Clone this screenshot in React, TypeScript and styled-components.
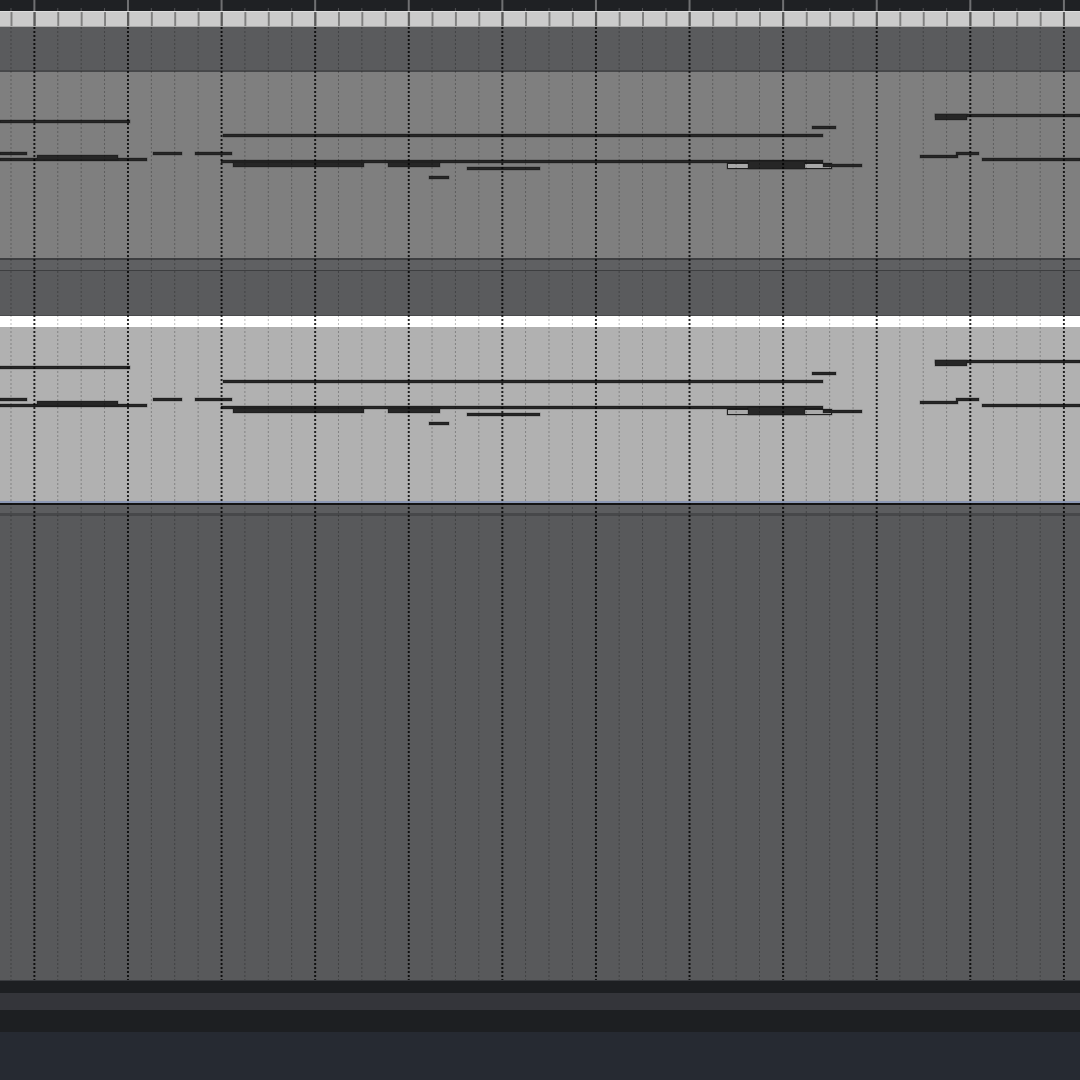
import React from "react";
import styled, { createGlobalStyle } from "styled-components";

const MINOR = 23.4;
const MAJOR = 93.6;
const MINOR_X = 10.5;
const MAJOR_X = 33.4;

const GlobalStyle = createGlobalStyle`
  html, body { margin: 0; padding: 0; background: #58595b; }
  body { width: 1080px; height: 1080px; overflow: hidden; font-family: "Liberation Sans", Arial, sans-serif; }
`;

const Page = styled.div`
  display: flex;
  flex-direction: column;
  width: 1080px;
  height: 1080px;
`;

const TopRuler = styled.div`
  flex: 0 0 11px;
  background-color: #1f2124;
  background-image:
    linear-gradient(to right, #6f7072 0 2px, transparent 2px),
    linear-gradient(to right, #4e4f52 0 1px, transparent 1px);
  background-size: ${MAJOR}px 100%, ${MINOR}px 3px;
  background-position: ${MAJOR_X}px 0, ${MINOR_X}px 100%;
  background-repeat: repeat-x;
`;

const BeatBar = styled.div`
  flex: 0 0 16px;
  box-sizing: border-box;
  border-top: 1px solid #dddddd;
  border-bottom: 1px solid #a9a9a9;
  background-color: #cbcbcb;
  background-image:
    linear-gradient(to right, #5b5b5b 0 2px, transparent 2px),
    linear-gradient(to right, #808080 0 2px, transparent 2px);
  background-size: ${MAJOR}px 100%, ${MINOR}px 100%;
  background-position: ${MAJOR_X}px 0, ${MINOR_X}px 0;
`;

const Arrange = styled.div`
  position: relative;
  flex: 0 0 953px;
  display: flex;
  flex-direction: column;
`;

const Lane = styled.div<{ $h: number }>`
  flex: 0 0 ${(p) => p.$h}px;
  background: #5a5b5d;
`;

const Line = styled.div<{ $h: number; $c: string }>`
  flex: 0 0 ${(p) => p.$h}px;
  background: ${(p) => p.$c};
`;

const Band = styled.div`
  flex: 0 0 13px;
  box-sizing: border-box;
  background: #5f6062;
  border-top: 2px solid #3d3e40;
  border-bottom: 1px solid #3d3e40;
`;

const ClipHeader = styled.div`
  flex: 0 0 11px;
  background: #ffffff;
`;

const ClipBody = styled.div<{ $h: number; $bg: string }>`
  position: relative;
  flex: 0 0 ${(p) => p.$h}px;
  background: ${(p) => p.$bg};
  overflow: hidden;
`;

const Note = styled.div<{ $light?: boolean }>`
  position: absolute;
  box-sizing: border-box;
  background: ${(p) => (p.$light ? "#a9a9a9" : "#262626")};
  border: 1px solid #202020;
  box-shadow: 0 0 0 0.5px rgba(0, 0, 0, 0.25);
`;

const Empty = styled.div`
  flex: 1 1 auto;
  background: #58595b;
`;

const GridOverlay = styled.div`
  position: absolute;
  inset: 0;
  pointer-events: none;
  background-image:
    linear-gradient(to right, rgba(0, 0, 0, 0.78) 0 2px, transparent 2px),
    linear-gradient(to right, rgba(0, 0, 0, 0.27) 0 1px, transparent 1px);
  background-size: ${MAJOR}px 100%, ${MINOR}px 100%;
  background-position: ${MAJOR_X}px 0, ${MINOR_X}px 0;
  -webkit-mask-image: repeating-linear-gradient(to bottom, #000 0 2px, transparent 2px 4px);
  mask-image: repeating-linear-gradient(to bottom, #000 0 2px, transparent 2px 4px);
`;

const Footer = styled.div`
  flex: 0 0 100px;
  display: flex;
  flex-direction: column;
`;

type N = { x: number; y: number; w: number; h: number; light?: boolean };

// absolute y positions in the first clip
const NOTES: N[] = [
  { x: 0, w: 130, y: 120, h: 3 },
  { x: 223, w: 600, y: 134, h: 3 },
  { x: 812, w: 24, y: 125.5, h: 3 },
  { x: 935, w: 145, y: 114, h: 3 },
  { x: 935, w: 32, y: 114, h: 6 },
  { x: 0, w: 27, y: 152, h: 3 },
  { x: 153, w: 29, y: 152, h: 3 },
  { x: 195, w: 37, y: 152, h: 3 },
  { x: 0, w: 147, y: 158, h: 3 },
  { x: 37, w: 81, y: 155, h: 5 },
  { x: 221, w: 602, y: 160, h: 3 },
  { x: 233, w: 131, y: 162, h: 5 },
  { x: 388, w: 52, y: 162, h: 5 },
  { x: 467, w: 73, y: 167, h: 3 },
  { x: 429, w: 20, y: 176, h: 3 },
  { x: 920, w: 38, y: 155, h: 3 },
  { x: 956, w: 23, y: 152, h: 3 },
  { x: 982, w: 98, y: 158, h: 3 },
  { x: 727, w: 105, y: 163, h: 6, light: true },
  { x: 748, w: 57, y: 161, h: 8 },
  { x: 823, w: 39, y: 164, h: 3 },
];

function NoteLayer({ offset }: { offset: number }) {
  return (
    <>
      {NOTES.map((n, i) => (
        <Note
          key={i}
          $light={n.light}
          style={{ left: n.x, top: n.y + offset, width: n.w, height: n.h }}
        />
      ))}
    </>
  );
}

export default function App() {
  return (
    <Page>
      <GlobalStyle />
      <TopRuler />
      <BeatBar />
      <Arrange>
        <Lane $h={43} />
        <Line $h={2} $c="#47484a" />
        <ClipBody $h={186} $bg="#7f7f7f">
          <NoteLayer offset={-72} />
        </ClipBody>
        <Band />
        <Lane $h={44} />
        <Line $h={1} $c="#4a4b4d" />
        <ClipHeader />
        <ClipBody $h={174} $bg="#b1b1b1">
          <NoteLayer offset={246 - 327} />
        </ClipBody>
        <Line $h={2} $c="#8c98b4" />
        <Line $h={2} $c="#141414" />
        <Line $h={8} $c="#5c5d5f" />
        <Line $h={3} $c="#47484a" />
        <Empty />
        <GridOverlay />
      </Arrange>
      <Footer>
        <Line $h={1} $c="#3a3c40" />
        <Line $h={12} $c="#1d1f22" />
        <Line $h={17} $c="#34353a" />
        <Line $h={22} $c="#1d1f22" />
        <Line $h={48} $c="#262a32" />
      </Footer>
    </Page>
  );
}
